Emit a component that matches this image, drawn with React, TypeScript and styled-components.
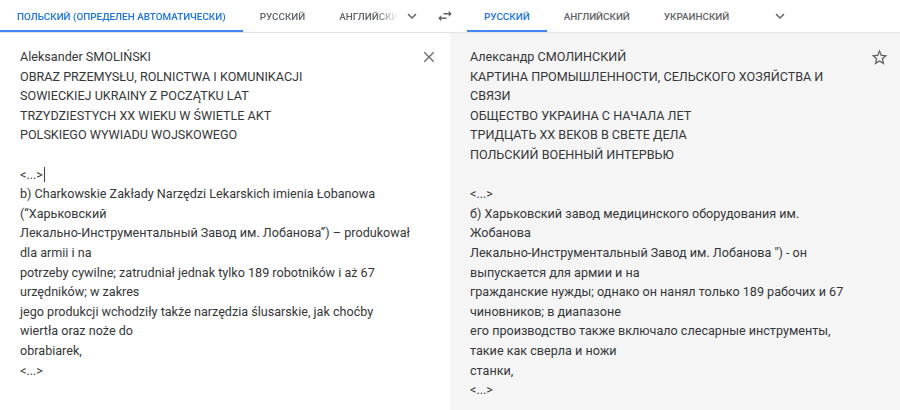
import React from "react";
import styled, { createGlobalStyle } from "styled-components";

const GlobalStyle = createGlobalStyle`
  html, body {
    margin: 0;
    padding: 0;
    background: #ffffff;
  }
  body {
    font-family: Roboto, "Noto Sans", Arial, sans-serif;
    color: #3c4043;
  }
`;

const Page = styled.div`
  width: 900px;
  height: 410px;
  display: flex;
  flex-direction: column;
  overflow: hidden;
`;

const Header = styled.div`
  flex: 0 0 33px;
  display: grid;
  grid-template-columns: 433px 34px 1fr;
  border-bottom: 1px solid #e3e3e3;
  box-sizing: border-box;
`;

const Side = styled.div`
  display: flex;
  align-items: stretch;
  min-width: 0;
`;

const TabRow = styled.div<{ $fade?: boolean }>`
  display: flex;
  align-items: stretch;
  overflow: hidden;
  flex: ${(p) => (p.$fade ? "1" : "0 0 auto")};
  min-width: 0;
  ${(p) =>
    p.$fade &&
    `-webkit-mask-image: linear-gradient(to right, #000 calc(100% - 22px), transparent 100%);
     mask-image: linear-gradient(to right, #000 calc(100% - 22px), transparent 100%);`}
`;

const Tab = styled.div<{ $active?: boolean }>`
  flex: 0 0 auto;
  display: flex;
  align-items: center;
  padding: 0 17px;
  font-size: 9.9px;
  font-weight: 500;
  white-space: nowrap;
  color: ${(p) => (p.$active ? "#1a73e8" : "#5f6368")};
  box-shadow: ${(p) => (p.$active ? "inset 0 -2px 0 #4285f4" : "none")};
`;

const IconButton = styled.div<{ $gap?: number; $end?: number }>`
  flex: 0 0 auto;
  width: 24px;
  display: flex;
  align-items: center;
  justify-content: center;
  margin-left: ${(p) => p.$gap ?? 0}px;
  margin-right: ${(p) => p.$end ?? 0}px;
  color: #5f6368;
`;

const Body = styled.div`
  flex: 1;
  display: grid;
  grid-template-columns: 450px 450px;
`;

const Pane = styled.div<{ $tinted?: boolean }>`
  display: flex;
  align-items: flex-start;
  padding: 14px 9px 0 20px;
  background: ${(p) => (p.$tinted ? "#f5f5f5" : "#ffffff")};
`;

const Text = styled.div`
  flex: 1;
  font-size: 12.6px;
  line-height: 19.6px;
  white-space: pre;
  color: #34373a;
`;

const Caret = styled.span`
  display: inline-block;
  width: 1px;
  height: 15px;
  margin-left: 1px;
  vertical-align: -3px;
  background: #3c4043;
`;

const Corner = styled.div<{ $tone?: string }>`
  flex: 0 0 auto;
  width: 24px;
  height: 24px;
  margin-top: -2px;
  display: flex;
  align-items: center;
  justify-content: center;
  color: ${(p) => p.$tone ?? "#70757a"};
`;

const Chevron = () => (
  <svg width="18" height="18" viewBox="0 0 24 24" fill="currentColor">
    <path d="M16.59 8.59L12 13.17 7.41 8.59 6 10l6 6 6-6z" />
  </svg>
);

const Swap = () => (
  <svg width="18" height="18" viewBox="0 0 24 24" fill="currentColor">
    <path d="M6.99 11L3 15l3.99 4v-3H14v-2H6.99v-3zM21 9l-3.99-4v3H10v2h7.01v3L21 9z" />
  </svg>
);

const Close = () => (
  <svg width="18" height="18" viewBox="0 0 24 24" fill="currentColor">
    <path d="M19 6.41L17.59 5 12 10.59 6.41 5 5 6.41 10.59 12 5 17.59 6.41 19 12 13.41 17.59 19 19 17.59 13.41 12z" />
  </svg>
);

const Star = () => (
  <svg width="19" height="19" viewBox="0 0 24 24" fill="currentColor">
    <path d="M22 9.24l-7.19-.62L12 2 9.19 8.63 2 9.24l5.46 4.73L5.82 21 12 17.27 18.18 21l-1.63-7.03L22 9.24zM12 15.4l-3.76 2.27 1-4.28-3.32-2.88 4.38-.38L12 6.1l1.71 4.04 4.38.38-3.32 2.88 1 4.28L12 15.4z" />
  </svg>
);

const sourceTop = `Aleksander SMOLIŃSKI
OBRAZ PRZEMYSŁU, ROLNICTWA I KOMUNIKACJI
SOWIECKIEJ UKRAINY Z POCZĄTKU LAT
TRZYDZIESTYCH XX WIEKU W ŚWIETLE AKT
POLSKIEGO WYWIADU WOJSKOWEGO

<...>`;

const sourceRest = `
b) Charkowskie Zakłady Narzędzi Lekarskich imienia Łobanowa
(“Харьковский
Лекально-Инструментальный Завод им. Лобанова”) – produkował
dla armii i na
potrzeby cywilne; zatrudniał jednak tylko 189 robotników i aż 67
urzędników; w zakres
jego produkcji wchodziły także narzędzia ślusarskie, jak choćby
wiertła oraz noże do
obrabiarek,
<...>`;

const target = `Александр СМОЛИНСКИЙ
КАРТИНА ПРОМЫШЛЕННОСТИ, СЕЛЬСКОГО ХОЗЯЙСТВА И
СВЯЗИ
ОБЩЕСТВО УКРАИНА С НАЧАЛА ЛЕТ
ТРИДЦАТЬ XX ВЕКОВ В СВЕТЕ ДЕЛА
ПОЛЬСКИЙ ВОЕННЫЙ ИНТЕРВЬЮ

<...>
б) Харьковский завод медицинского оборудования им.
Жобанова
Лекально-Инструментальный Завод им. Лобанова ") - он
выпускается для армии и на
гражданские нужды; однако он нанял только 189 рабочих и 67
чиновников; в диапазоне
его производство также включало слесарные инструменты,
такие как сверла и ножи
станки,
<...>`;

export default function App() {
  return (
    <Page>
      <GlobalStyle />
      <Header>
        <Side>
          <TabRow $fade>
            <Tab $active>ПОЛЬСКИЙ (ОПРЕДЕЛЕН АВТОМАТИЧЕСКИ)</Tab>
            <Tab>РУССКИЙ</Tab>
            <Tab>АНГЛИЙСКИЙ</Tab>
          </TabRow>
          <IconButton $gap={2} $end={9}>
            <Chevron />
          </IconButton>
        </Side>
        <IconButton>
          <Swap />
        </IconButton>
        <Side>
          <TabRow>
            <Tab $active>РУССКИЙ</Tab>
            <Tab>АНГЛИЙСКИЙ</Tab>
            <Tab>УКРАИНСКИЙ</Tab>
          </TabRow>
          <IconButton $gap={22}>
            <Chevron />
          </IconButton>
        </Side>
      </Header>
      <Body>
        <Pane>
          <Text>
            {sourceTop}
            <Caret />
            {sourceRest}
          </Text>
          <Corner>
            <Close />
          </Corner>
        </Pane>
        <Pane $tinted>
          <Text>{target}</Text>
          <Corner $tone="#5f6368">
            <Star />
          </Corner>
        </Pane>
      </Body>
    </Page>
  );
}
